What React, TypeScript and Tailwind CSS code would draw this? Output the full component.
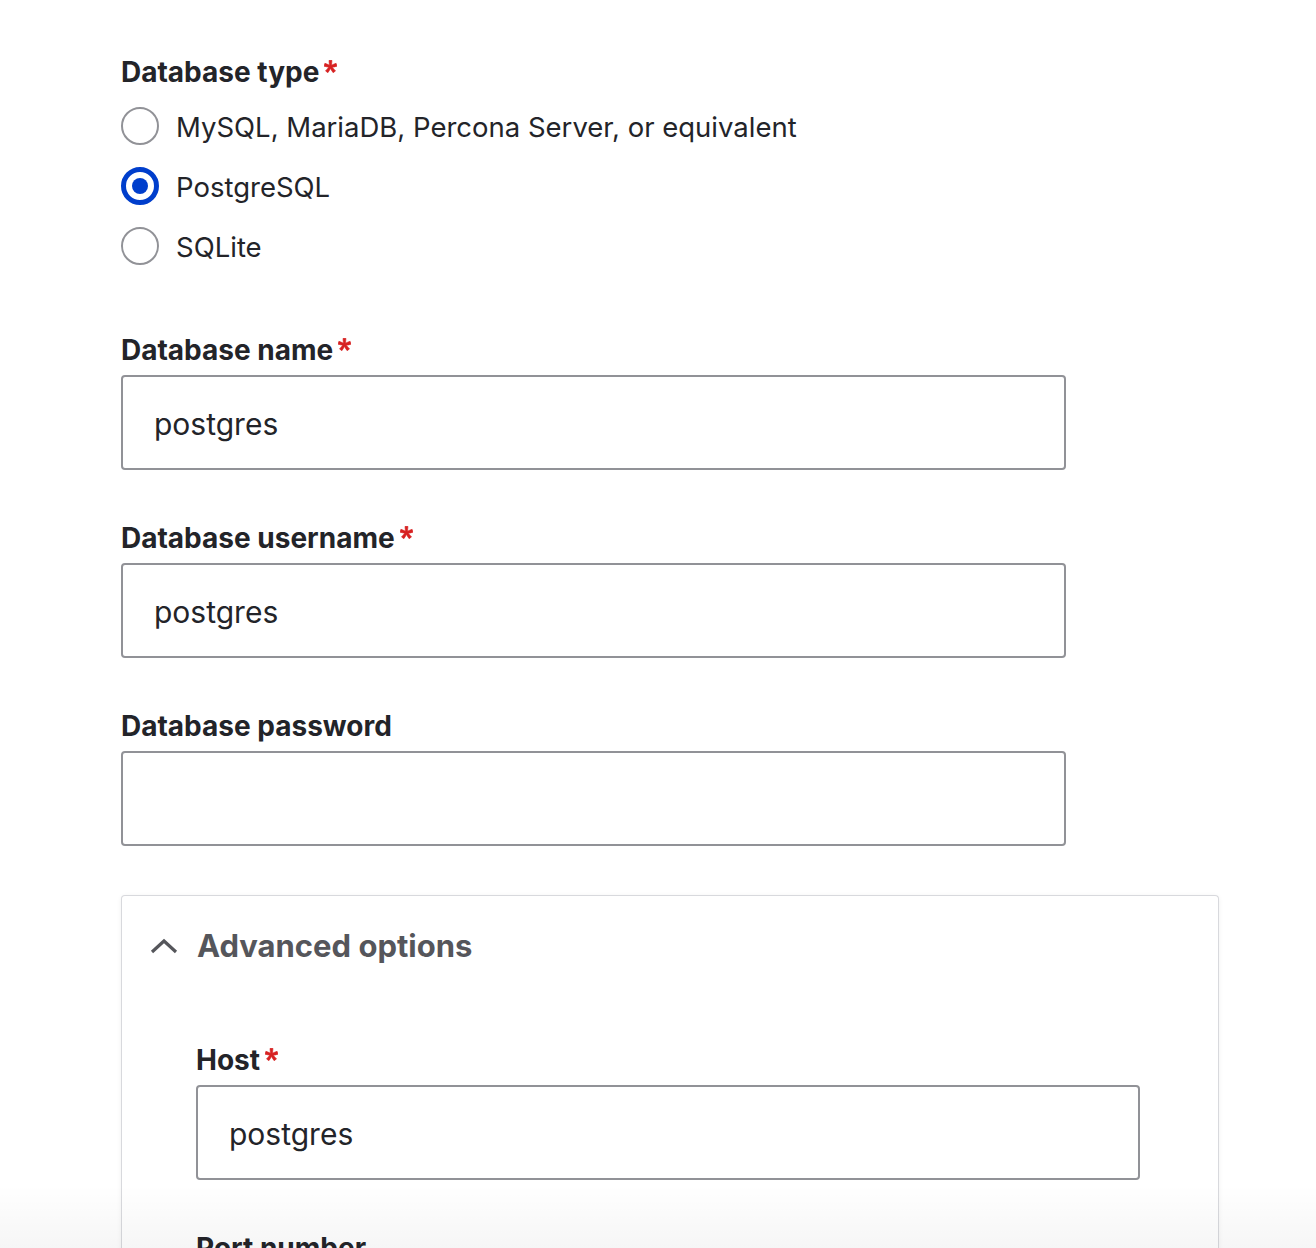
import React from 'react'

const font = { fontFamily: 'Inter, "Noto Sans", sans-serif' }

function RequiredMark() {
    return (
        <svg viewBox="0 0 16 16" className="ml-[5px] mt-[2px] h-[13px] w-[13px] self-start">
            <path
                d="M0,7.562l1.114,-3.438c2.565,0.906 4.43,1.688 5.59,2.35c-0.306,-2.921 -0.467,-4.93 -0.484,-6.024l3.511,0c-0.05,1.594 -0.235,3.596 -0.558,6.008c1.663,-0.838 3.566,-1.613 5.714,-2.325l1.113,3.437c-2.05,0.678 -4.06,1.131 -6.028,1.356c0.984,0.856 2.372,2.381 4.166,4.575l-2.906,2.059c-0.935,-1.274 -2.041,-3.009 -3.317,-5.206c-1.194,2.275 -2.244,4.013 -3.147,5.206l-2.856,-2.059c1.872,-2.307 3.211,-3.832 4.017,-4.575c-2.084,-0.403 -4.085,-0.855 -6.007,-1.356"
                fill="#d72222"
                stroke="#d72222"
                strokeWidth="0.8"
            />
        </svg>
    )
}

function Label({ text, required }: { text: string; required?: boolean }) {
    return (
        <div className="flex h-[32px] items-center pt-[4px] text-[28px] font-bold leading-[28px] text-[#232429]">
            <span>{text}</span>
            {required && <RequiredMark />}
        </div>
    )
}

function TextField({ label, value, required, width = 'w-[945px]' }: { label: string; value: string; required?: boolean; width?: string }) {
    return (
        <div className="flex flex-col">
            <Label text={label} required={required} />
            <div
                className={`mt-[11px] flex h-[95px] items-center rounded-[4px] border-2 border-[#919297] bg-white pl-[31px] pt-[3px] text-[30px] text-[#232429] ${width}`}
            >
                {value}
            </div>
        </div>
    )
}

function Radio({ label, checked }: { label: string; checked?: boolean }) {
    return (
        <div className="flex h-[60px] items-center gap-[17px]">
            {checked ? (
                <div className="flex h-[38px] w-[38px] items-center justify-center rounded-full border-[5px] border-[#003ecc] bg-white">
                    <div className="h-[16px] w-[16px] rounded-full bg-[#003ecc]" />
                </div>
            ) : (
                <div className="h-[38px] w-[38px] rounded-full border-2 border-[#919297] bg-white" />
            )}
            <span className="pt-[3px] text-[27.5px] text-[#232429]">{label}</span>
        </div>
    )
}

export default function App() {
    return (
        <div className="relative h-[1248px] overflow-hidden bg-white" style={font}>
            <div className="flex w-[1219px] flex-col pl-[121px] pt-[54px]">
                <Label text="Database type" required />
                <div className="mt-[10px] flex flex-col">
                    <Radio label="MySQL, MariaDB, Percona Server, or equivalent" />
                    <Radio label="PostgreSQL" checked />
                    <Radio label="SQLite" />
                </div>

                <div className="mt-[56px] flex flex-col gap-[50px]">
                    <TextField label="Database name" value="postgres" required />
                    <TextField label="Database username" value="postgres" required />
                    <TextField label="Database password" value="" />
                </div>

                <div className="mt-[49px] w-[1098px] rounded-t-[4px] border border-b-0 border-[#d8d9dd] bg-white shadow-[0_1px_5px_rgba(0,0,0,0.06)]">
                    <div className="flex h-[99px] items-center pl-[28px]">
                        <svg viewBox="0 0 28 16" className="h-[16px] w-[28px]" fill="none">
                            <path d="M2 14 L14 3 L26 14" stroke="#55565b" strokeWidth="3.2" />
                        </svg>
                        <span className="ml-[19px] pt-[2px] text-[31px] font-bold text-[#55565b]">Advanced options</span>
                    </div>
                    <div className="mt-[47px] flex flex-col gap-[50px] pb-[80px] pl-[74px]">
                        <TextField label="Host" value="postgres" required width="w-[944px]" />
                        <TextField label="Port number" value="" width="w-[944px]" />
                    </div>
                </div>
            </div>
            <div className="pointer-events-none absolute bottom-0 left-0 h-[64px] w-full bg-linear-to-b from-transparent to-[rgba(0,0,0,0.035)]" />
        </div>
    )
}
